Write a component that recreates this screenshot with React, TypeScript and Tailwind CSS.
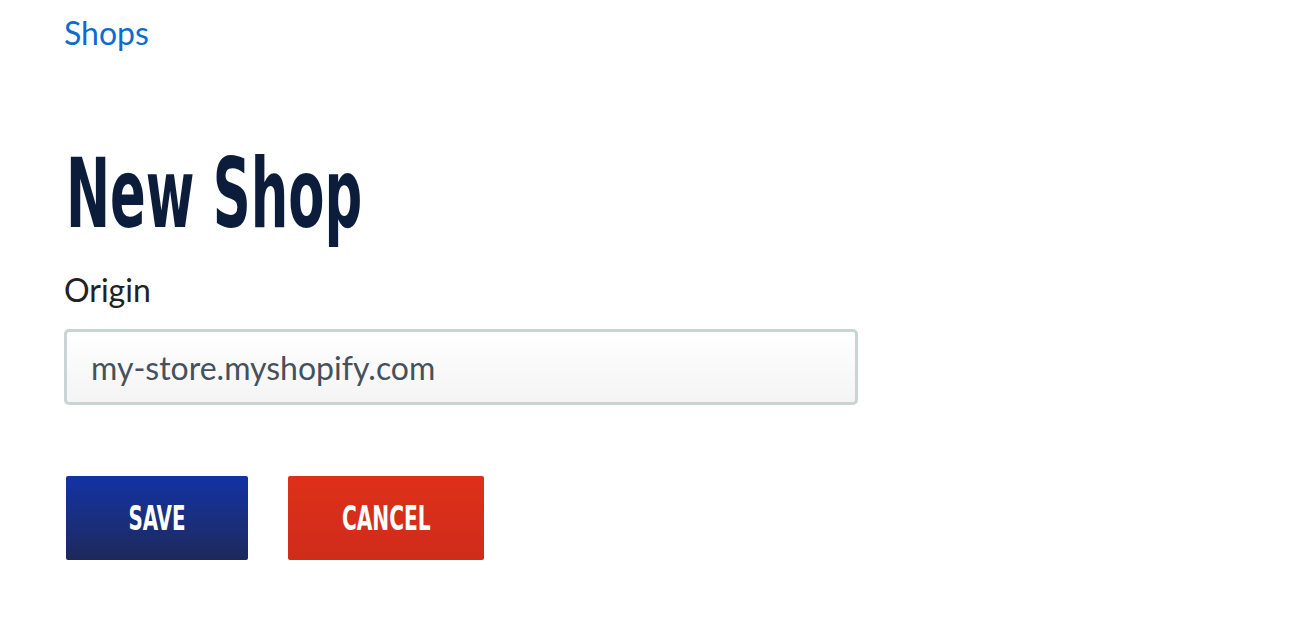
export default function App() {
  return (
    <div className="min-h-screen bg-white px-16 pt-[14px] font-['Lato',sans-serif]">
      <a href="#" className="block text-[32px] leading-[38px] text-[#0a6cce]">
        Shops
      </a>

      <h1 className="mt-[94px] ml-[2px] h-[96px] text-[96px] leading-none font-bold text-[#0b1d3a] font-['DejaVu_Sans_Condensed','DejaVu_Sans',sans-serif] font-stretch-condensed">
        <span className="inline-block origin-left scale-x-[0.61] whitespace-nowrap">
          New Shop
        </span>
      </h1>

      <form className="mt-[29px]">
        <label className="block text-[32px] leading-[38px] text-[#222222]">
          Origin
        </label>
        <input
          type="text"
          placeholder="my-store.myshopify.com"
          className="mt-[20px] block h-[76px] w-[794px] rounded-[5px] border-[3px] border-[#c9d5d4] bg-gradient-to-b from-white to-[#f4f4f4] pl-6 text-[32px] leading-[38px] text-[#46515c] outline-none placeholder:text-[#46515c]"
        />

        <div className="mt-[71px] ml-[2px] flex gap-10">
          <button
            type="button"
            className="flex h-[84px] w-[182px] items-center justify-center rounded-[2px] bg-gradient-to-b from-[#1232a6] to-[#1d295c] text-white"
          >
            <span className="inline-block scale-x-[0.65] text-[34px] leading-none font-bold font-['DejaVu_Sans_Condensed','DejaVu_Sans',sans-serif] font-stretch-condensed">
              SAVE
            </span>
          </button>
          <button
            type="button"
            className="flex h-[84px] w-[196px] items-center justify-center rounded-[2px] bg-gradient-to-b from-[#de3019] to-[#cf2c1a] text-white"
          >
            <span className="inline-block scale-x-[0.66] text-[34px] leading-none font-bold font-['DejaVu_Sans_Condensed','DejaVu_Sans',sans-serif] font-stretch-condensed">
              CANCEL
            </span>
          </button>
        </div>
      </form>
    </div>
  )
}
